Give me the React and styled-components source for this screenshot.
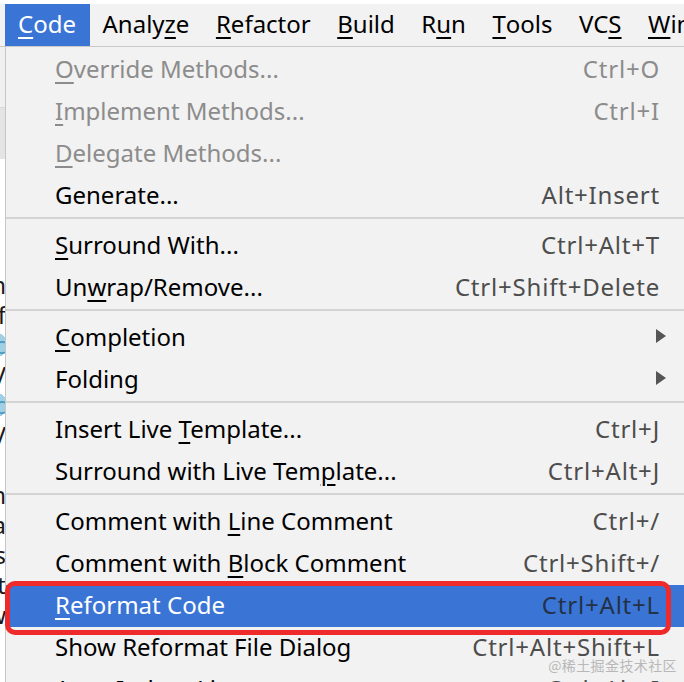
import styled, { createGlobalStyle } from "styled-components";

const GlobalStyle = createGlobalStyle`
  html, body {
    margin: 0;
    padding: 0;
    background: #ffffff;
    overflow: hidden;
  }
  body {
    font-family: "Noto Sans", "Open Sans", "Noto Sans CJK SC", sans-serif;
  }
`;

const menus = [
  { label: "Code", key: 0, active: true },
  { label: "Analyze", key: 5 },
  { label: "Refactor", key: 0 },
  { label: "Build", key: 0 },
  { label: "Run", key: 1 },
  { label: "Tools", key: 0 },
  { label: "VCS", key: 2 },
  { label: "Window", key: 0 },
];

const groups = [
  [
    { label: "Override Methods...", key: 0, shortcut: "Ctrl+O", disabled: true },
    { label: "Implement Methods...", key: 0, shortcut: "Ctrl+I", disabled: true },
    { label: "Delegate Methods...", key: 0, disabled: true },
    { label: "Generate...", shortcut: "Alt+Insert" },
  ],
  [
    { label: "Surround With...", key: 0, shortcut: "Ctrl+Alt+T" },
    { label: "Unwrap/Remove...", key: 2, shortcut: "Ctrl+Shift+Delete" },
  ],
  [
    { label: "Completion", key: 0, submenu: true },
    { label: "Folding", submenu: true },
  ],
  [
    { label: "Insert Live Template...", key: 12, shortcut: "Ctrl+J" },
    { label: "Surround with Live Template...", key: 22, shortcut: "Ctrl+Alt+J" },
  ],
  [
    { label: "Comment with Line Comment", key: 13, shortcut: "Ctrl+/" },
    { label: "Comment with Block Comment", key: 13, shortcut: "Ctrl+Shift+/" },
    { label: "Reformat Code", key: 0, shortcut: "Ctrl+Alt+L", selected: true },
    { label: "Show Reformat File Dialog", shortcut: "Ctrl+Alt+Shift+L" },
    { label: "Auto-Indent Lines", shortcut: "Ctrl+Alt+I" },
  ],
];

const editorLines = ["", "", "", "", "n", "f", "c", "V", "c", "V", "", "n", "a", "s", "t", "w", ""];

const Mnemonic = ({ text, at }) => {
  if (at === undefined) return text;
  return (
    <>
      {text.slice(0, at)}
      <U>{text[at]}</U>
      {text.slice(at + 1)}
    </>
  );
};

export default function App() {
  return (
    <>
      <GlobalStyle />
      <Screen>
        <MenuBar>
          {menus.map((m) => (
            <BarItem key={m.label} $active={m.active}>
              <Mnemonic text={m.label} at={m.key} />
            </BarItem>
          ))}
        </MenuBar>
        <Editor>
          <Gutter />
          <Lines>
            {editorLines.map((c, i) => (
              <Line key={i} $bubble={c === "c"}>{c}</Line>
            ))}
          </Lines>
        </Editor>

        <Dropdown>
          {groups.map((g, gi) => (
            <Group key={gi} $first={gi === 0}>
              {g.map((it) => (
                <Row key={it.label} $selected={it.selected} $disabled={it.disabled}>
                  <Label>
                    <Mnemonic text={it.label} at={it.key} />
                  </Label>
                  {it.shortcut && (
                    <Shortcut $disabled={it.disabled} $selected={it.selected}>
                      {it.shortcut}
                    </Shortcut>
                  )}
                  {it.submenu && (
                    <Arrow viewBox="0 0 10 14">
                      <path d="M0 0 L10 7 L0 14 Z" fill="#555555" />
                    </Arrow>
                  )}
                  {it.selected && <Marker />}
                </Row>
              ))}
            </Group>
          ))}
        </Dropdown>
        <Watermark>@稀土掘金技术社区</Watermark>
      </Screen>
    </>
  );
}

const Screen = styled.div`
  position: relative;
  width: 684px;
  height: 682px;
  overflow: hidden;
  background: #ffffff;
`;

const MenuBar = styled.div`
  display: flex;
  margin-top: 4px;
  height: 42px;
  background: #f2f2f2;
  border-bottom: 1px solid #c9c9c9;
  padding-left: 5px;
  white-space: nowrap;
`;

const BarItem = styled.div`
  display: flex;
  align-items: center;
  padding: 0 13.5px 4px 13px;
  font-size: 24px;
  color: ${(p) => (p.$active ? "#ffffff" : "#000000")};
  background: ${(p) => (p.$active ? "#3a75d6" : "transparent")};
`;

const U = styled.span`
  text-decoration: underline;
  text-decoration-thickness: 2px;
  text-underline-offset: 4px;
`;

const Editor = styled.div`
  display: flex;
  height: 636px;
`;

const Gutter = styled.div`
  width: 6px;
  height: 112px;
  background: linear-gradient(#f0f0f0 0 60px, #d9d9d9 60px 61px, #e4e4e4 61px);
`;

const Lines = styled.div`
  position: absolute;
  left: -14px;
  top: 150px;
  width: 20px;
  font-family: "Noto Sans", sans-serif;
  font-size: 24px;
  text-align: right;
  color: #1a1a1a;
`;

const Line = styled.div`
  height: 30px;
  line-height: 30px;
  color: ${(p) => (p.$bubble ? "#4a9bc2" : "#1a1a1a")};
  background: ${(p) => (p.$bubble ? "radial-gradient(circle at 10px 15px, #9fd0e6 12px, transparent 12px)" : "none")};
`;

const Dropdown = styled.div`
  position: absolute;
  left: 5px;
  top: 47px;
  width: 700px;
  background: #f2f2f2;
  border-left: 1px solid #c6c6c6;
  padding-top: 2px;
`;

const Group = styled.div`
  border-top: ${(p) => (p.$first ? "none" : "2px solid #d4d4d4")};
  padding-top: ${(p) => (p.$first ? "0" : "6px")};
`;

const Row = styled.div`
  position: relative;
  display: flex;
  align-items: center;
  height: 42px;
  box-sizing: border-box;
  padding: 0 46px 4px 49px;
  font-size: 24px;
  white-space: nowrap;
  background: ${(p) => (p.$selected ? "#3a75d6" : "transparent")};
  color: ${(p) => (p.$selected ? "#ffffff" : p.$disabled ? "#8c8c8c" : "#000000")};
`;

const Label = styled.span`
  flex: 1;
`;

const Shortcut = styled.span`
  letter-spacing: 0.8px;
  color: ${(p) => (p.$selected ? "#233246" : p.$disabled ? "#8c8c8c" : "#4d4d4d")};
`;

const Arrow = styled.svg`
  width: 10px;
  height: 14px;
  margin-right: -6px;
`;

const Marker = styled.div`
  position: absolute;
  left: -1px;
  top: -4px;
  width: 656px;
  height: 44px;
  border: 5px solid #ee2a2a;
  border-radius: 10px;
  pointer-events: none;
`;

const Watermark = styled.div`
  position: absolute;
  right: 7px;
  top: 655px;
  font-family: "Noto Sans CJK SC", sans-serif;
  font-size: 14px;
  color: #b8b8b8;
  letter-spacing: 0.4px;
`;
